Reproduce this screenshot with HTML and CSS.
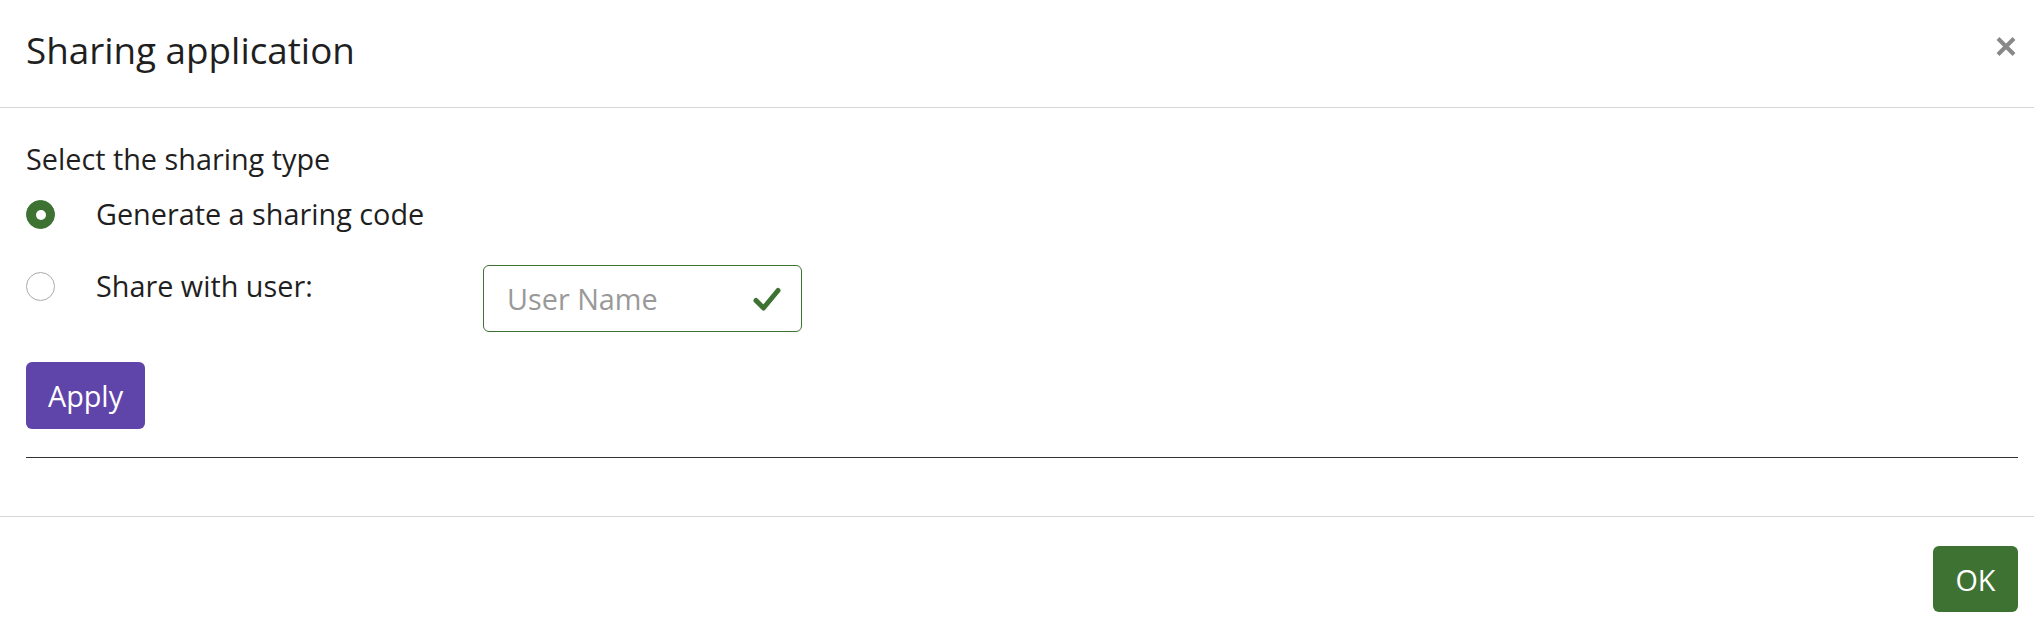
FILE: index.html
```html
<!DOCTYPE html>
<html lang="en">
<head>
<meta charset="utf-8">
<title>Sharing application</title>
<link rel="stylesheet" href="styles.css">
</head>
<body>
<div class="modal">
  <header class="modal-header">
    <h1 class="modal-title">Sharing application</h1>
    <button class="close" aria-label="Close">
      <svg width="20" height="19" viewBox="0 0 20 19"><path d="M2 1.5 L18 17.5 M18 1.5 L2 17.5" stroke="#888" stroke-width="4" fill="none"/></svg>
    </button>
  </header>
  <section class="modal-body">
    <div class="group-label">Select the sharing type</div>
    <div class="option">
      <span class="radio checked"></span>
      <span class="option-label">Generate a sharing code</span>
    </div>
    <div class="option option-user">
      <span class="radio"></span>
      <span class="option-label user-label">Share with user:</span>
      <div class="input-wrap">
        <span class="placeholder">User Name</span>
        <svg class="check" width="28" height="26" viewBox="0 0 28 26"><path d="M3 14.5 L10.5 22 L25 4.5" stroke="#3d7233" stroke-width="5" fill="none" stroke-linecap="round" stroke-linejoin="round"/></svg>
      </div>
    </div>
    <div class="apply-row">
      <button class="btn btn-apply">Apply</button>
    </div>
    <hr class="divider">
  </section>
  <footer class="modal-footer">
    <button class="btn btn-ok">OK</button>
  </footer>
</div>
</body>
</html>
```
FILE: styles.css
```css
html, body {
  margin: 0;
  padding: 0;
  background: #fff;
}
body {
  font-family: "Open Sans", "Noto Sans", sans-serif;
  color: #222;
}
.modal {
  width: 2034px;
  height: 632px;
  display: flex;
  flex-direction: column;
}
.modal-header {
  display: flex;
  justify-content: space-between;
  align-items: flex-start;
  padding: 23px 18px 30px 26px;
  border-bottom: 1px solid #d6d6d6;
}
.modal-title {
  margin: 0;
  font-size: 36.8px;
  font-weight: 400;
  line-height: 54px;
  color: #1f1f1f;
}
.close {
  border: 0;
  background: none;
  padding: 0;
  margin-top: 14px;
  width: 20px;
  height: 19px;
  display: flex;
}
.modal-body {
  padding: 30px 16px 0 26px;
  display: flex;
  flex-direction: column;
  font-size: 28.8px;
  line-height: 42px;
  color: #1f1f1f;
}
.group-label {
  height: 42px;
}
.option {
  display: flex;
  align-items: flex-start;
  margin-top: 13px;
}
.option-user {
  margin-top: 30px;
}
.radio {
  box-sizing: border-box;
  width: 29px;
  height: 29px;
  border-radius: 50%;
  border: 1px solid #aaa;
  margin-top: 7px;
  margin-right: 41px;
  flex: none;
  display: flex;
  align-items: center;
  justify-content: center;
}
.radio.checked {
  background: #3d7233;
  border-color: #3d7233;
}
.radio.checked::after {
  content: "";
  width: 10px;
  height: 10px;
  border-radius: 50%;
  background: #fff;
}
.user-label {
  width: 387px;
}
.input-wrap {
  box-sizing: border-box;
  width: 319px;
  height: 67px;
  border: 1px solid #3d7233;
  border-radius: 6px;
  display: flex;
  align-items: center;
  justify-content: space-between;
  padding: 0 20px 0 23px;
}
.placeholder {
  color: #999;
}
.apply-row {
  margin-top: 30px;
  display: flex;
}
.btn {
  font-family: "Open Sans", "Noto Sans", sans-serif;
  font-size: 28.8px;
  color: #fff;
  border: 0;
  border-radius: 6px;
  display: flex;
  align-items: center;
  justify-content: center;
  padding: 0;
}
.btn-apply {
  background: #5f45a9;
  width: 119px;
  height: 67px;
}
.divider {
  margin: 28px 0 0 0;
  border: 0;
  border-top: 1px solid #333;
  height: 0;
}
.modal-footer {
  margin-top: 58px;
  border-top: 1px solid #d6d6d6;
  padding: 29px 16px 0 0;
  display: flex;
  justify-content: flex-end;
}
.btn-ok {
  background: #3d7233;
  width: 85px;
  height: 66px;
}
```
